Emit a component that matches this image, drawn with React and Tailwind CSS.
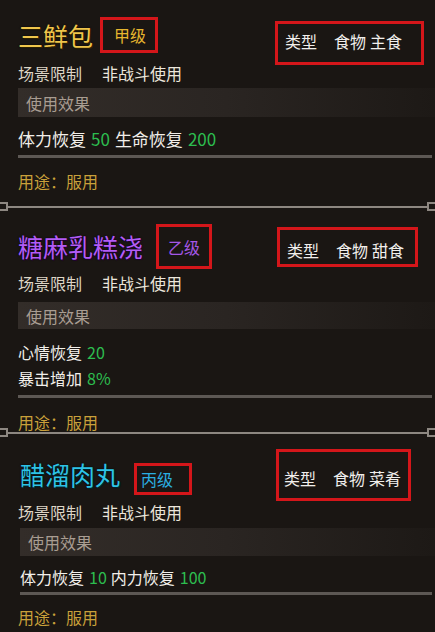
import React from "react";

const FONT = { fontFamily: '"Noto Sans CJK SC", "Noto Sans", sans-serif' };

function Label({ children, className = "" }) {
  return (
    <div className={"flex h-[20px] items-center pl-[18px] text-[16px] leading-none text-[#ddd5c6] " + className}>
      {children}
    </div>
  );
}

function Scene({ className = "" }) {
  return (
    <Label className={className}>
      <span>场景限制</span>
      <span className="ml-[20px] text-[#ece6dc]">非战斗使用</span>
    </Label>
  );
}

function EffectBar({ className = "" }) {
  return (
    <div
      className={
        "ml-[18px] flex items-center bg-gradient-to-r from-[#332d29] via-[#2a2522] to-[#1d1916] pl-[8px] text-[16px] leading-none text-[#a99d92] " +
        className
      }
    >
      使用效果
    </div>
  );
}

function Rule({ className = "" }) {
  return <div className={"ml-[18px] mr-[3px] h-[3px] bg-[#5d5854] " + className} />;
}

function Usage({ className = "" }) {
  return (
    <div className={"flex h-[20px] items-center pl-[18px] text-[16px] leading-none text-[#c9a03a] " + className}>
      用途：服用
    </div>
  );
}

function Separator() {
  return (
    <div className="relative h-[2px] w-full bg-[#8d8781]">
      <div className="absolute left-0 top-[-4px] h-[9px] w-[8px] border-[2px] border-l-0 border-[#8d8781] bg-[#1a1613]" />
      <div className="absolute right-0 top-[-4px] h-[9px] w-[8px] border-[2px] border-r-0 border-[#8d8781] bg-[#1a1613]" />
    </div>
  );
}

function TypeBox({ sub, className = "", textClass = "" }) {
  return (
    <div className={"flex items-start border-[3px] border-[#d4161a] text-[16px] leading-none text-[#f1efec] " + className}>
      <div className={"flex h-[20px] items-center " + textClass}>
        <span>类型</span>
        <span className="ml-[17px]">食物</span>
        <span className="ml-[4px]">{sub}</span>
      </div>
    </div>
  );
}

function Data({ label, value, className = "" }) {
  return (
    <span className={className}>
      <span className="text-[#f2efea]">{label}</span>
      <span className="ml-[5px] text-[#2dbd4f]">{value}</span>
    </span>
  );
}

export default function App() {
  return (
    <div style={FONT} className="h-[632px] w-[435px] overflow-hidden bg-[#1a1613]">
      {/* Section 1 */}
      <div className="flex h-[206px] flex-col">
        <div className="flex h-[63px] items-start pl-[18px]">
          <div className="mt-[17px] flex h-[36px] items-center text-[25px] leading-none text-[#efc54c] [text-shadow:0_0_2px_#000,1px_1px_0_#3a2a00]">
            三鲜包
          </div>
          <div className="ml-[7px] mt-[17px] flex h-[36px] w-[58px] items-center border-[3px] border-[#d4161a] pl-[11px] text-[16px] leading-none text-[#e6b52e]">
            甲级
          </div>
          <TypeBox sub="主食" className="ml-auto mr-[11px] mt-[21px] h-[44px] w-[149px] pl-[7px] pt-[7px]" />
        </div>
        <Scene />
        <EffectBar className="mt-[5px] h-[29px]" />
        <div className="mt-[11px] flex h-[20px] items-center pl-[18px] text-[17px] leading-none">
          <Data label="体力恢复" value="50" />
          <Data label="生命恢复" value="200" className="ml-[5px]" />
        </div>
        <Rule className="mt-[7px]" />
        <Usage className="mt-[13px]" />
      </div>
      <Separator />

      {/* Section 2 */}
      <div className="flex h-[224px] flex-col">
        <div className="flex h-[65px] items-start pl-[18px]">
          <div className="mt-[20px] flex h-[36px] items-center text-[25px] leading-none text-[#b25cf6] [text-shadow:0_0_2px_#000,1px_1px_0_#2a0040]">
            糖麻乳糕浇
          </div>
          <div className="ml-[13px] mt-[16px] flex h-[45px] w-[56px] items-center border-[3px] border-[#d4161a] pl-[9px] text-[16px] leading-none text-[#a457e6]">
            乙级
          </div>
          <TypeBox sub="甜食" className="ml-auto mr-[17px] mt-[19px] h-[40px] w-[141px] pl-[7px] pt-[10px]" />
        </div>
        <Scene />
        <EffectBar className="mt-[9px] h-[27px]" />
        <div className="mt-[13px] flex h-[20px] items-center pl-[18px] text-[16px] leading-none">
          <Data label="心情恢复" value="20" />
        </div>
        <div className="mt-[6px] flex h-[20px] items-center pl-[18px] text-[16px] leading-none">
          <Data label="暴击增加" value="8%" />
        </div>
        <Rule className="mt-[7px]" />
        <Usage className="mt-[14px]" />
      </div>
      <Separator />

      {/* Section 3 */}
      <div className="flex h-[198px] flex-col">
        <div className="flex h-[68px] items-start pl-[20px]">
          <div className="mt-[22px] flex h-[36px] items-center text-[25px] leading-none text-[#2ec3e6] [text-shadow:0_0_2px_#000,1px_1px_0_#00303a]">
            醋溜肉丸
          </div>
          <div className="ml-[14px] mt-[29px] flex h-[32px] w-[58px] items-center border-[3px] border-[#d4161a] pl-[4px] text-[16px] leading-none text-[#2aaee0]">
            丙级
          </div>
          <TypeBox sub="菜肴" className="ml-auto mr-[24px] mt-[15px] h-[52px] w-[135px] pl-[5px] pt-[16px]" />
        </div>
        <Scene />
        <EffectBar className="mt-[6px] h-[28px] !ml-[20px]" />
        <div className="mt-[11px] flex h-[20px] items-center pl-[20px] text-[16px] leading-none">
          <Data label="体力恢复" value="10" />
          <Data label="内力恢复" value="100" className="ml-[4px]" />
        </div>
        <Rule className="mt-[5px] !ml-[20px]" />
        <Usage className="mt-[12px]" />
      </div>
    </div>
  );
}
